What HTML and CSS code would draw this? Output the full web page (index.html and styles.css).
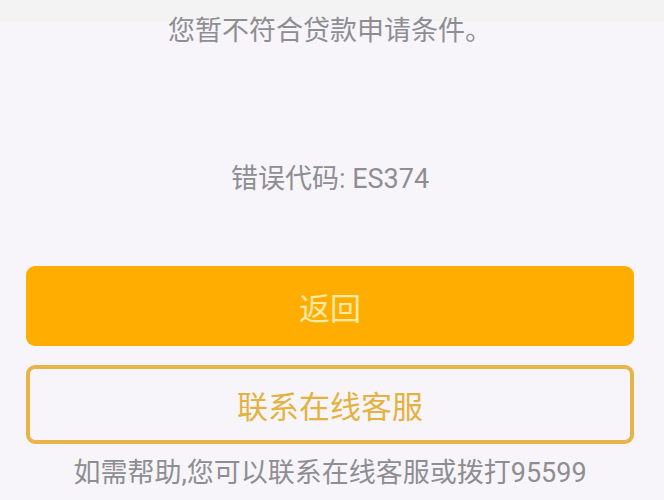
FILE: index.html
```html
<!DOCTYPE html>
<html lang="zh-CN">
<head>
<meta charset="utf-8">
<link rel="stylesheet" href="styles.css">
</head>
<body>
<main class="page">
  <p class="msg">您暂不符合贷款申请条件。</p>
  <p class="code">错误代码: ES374</p>
  <div class="actions">
    <button class="btn btn-primary">返回</button>
    <button class="btn btn-outline">联系在线客服</button>
  </div>
  <p class="help">如需帮助,您可以联系在线客服或拨打95599</p>
</main>
</body>
</html>
```
FILE: styles.css
```css
html, body {
  margin: 0;
  padding: 0;
}
body {
  width: 664px;
  height: 500px;
  overflow: hidden;
  background: linear-gradient(#f3f3f3 0, #f3f3f3 21px, #f8f5fa 21px);
  font-family: Roboto, "Noto Sans CJK SC", "Noto Sans", sans-serif;
}
.page {
  display: flex;
  flex-direction: column;
  padding: 13px 30px 0 26px;
}
.msg, .code, .help {
  margin: 0;
  text-align: center;
  color: #8e8e92;
  font-size: 27px;
  line-height: 36px;
}
.code {
  margin-top: 112px;
}
.actions {
  display: flex;
  flex-direction: column;
  gap: 19px;
  margin-top: 69px;
}
.btn {
  display: flex;
  align-items: center;
  justify-content: center;
  box-sizing: border-box;
  width: 608px;
  height: 80px;
  border-radius: 9px;
  font-family: inherit;
  font-size: 31px;
  padding: 0;
}
.btn-primary {
  background: #ffad01;
  color: #ffe9a6;
  border: none;
}
.btn-outline {
  background: transparent;
  color: #e3b23f;
  border: 4px solid #e8b44a;
  height: 79px;
}
.help {
  margin-top: 11px;
}
```
